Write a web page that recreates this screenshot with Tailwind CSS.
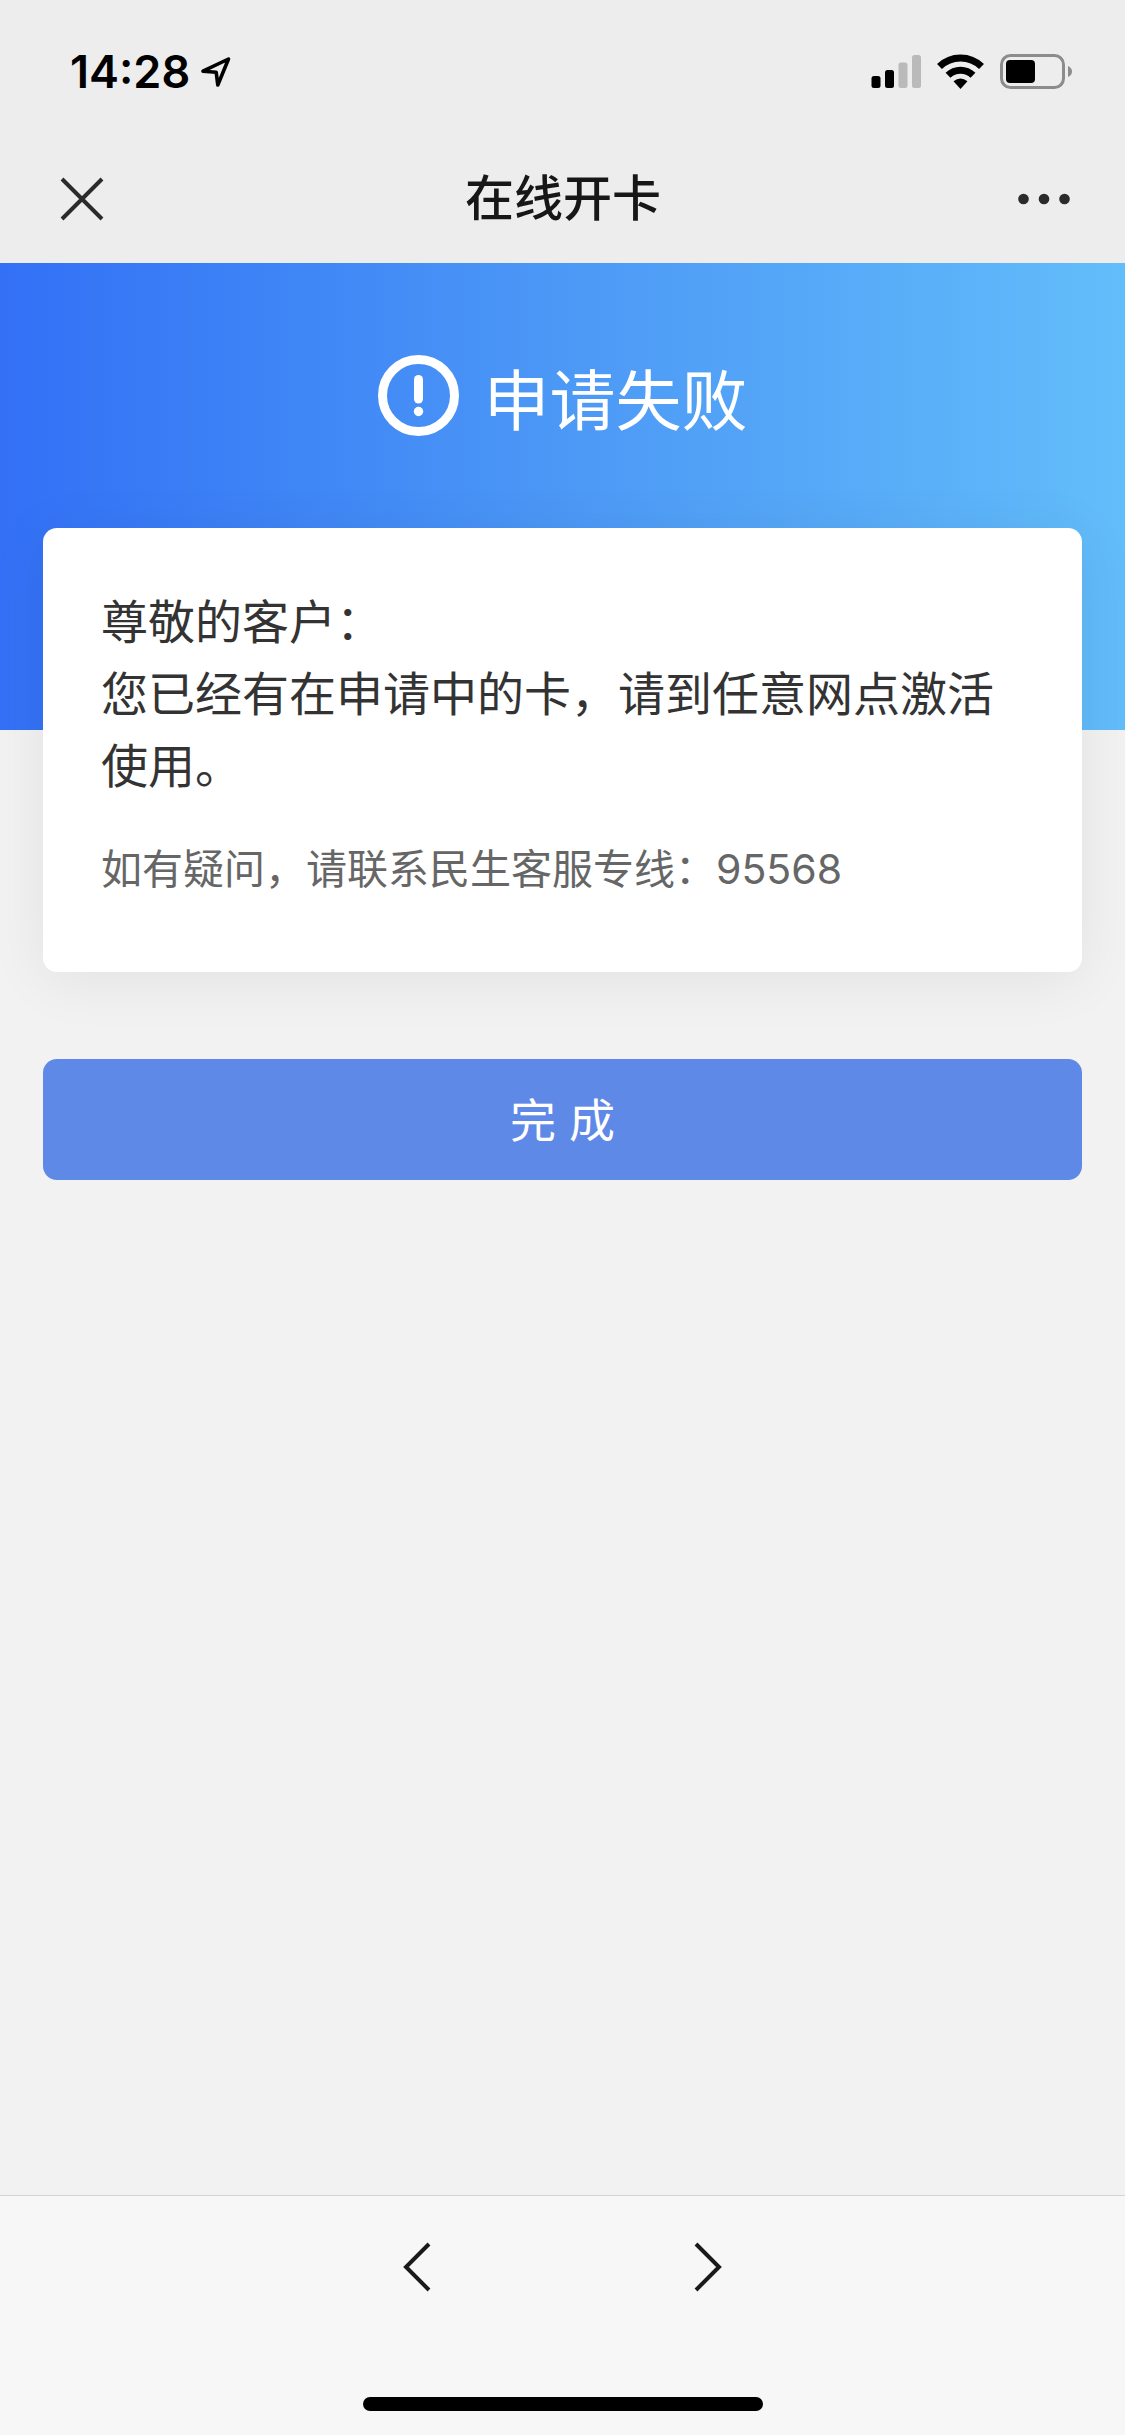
<!DOCTYPE html>
<html lang="zh-CN">
<head>
<meta charset="utf-8">
<meta name="viewport" content="width=device-width, initial-scale=1">
<title>在线开卡</title>
<script src="https://cdn.jsdelivr.net/npm/@tailwindcss/browser@4"></script>
</head>
<body class="flex min-h-screen flex-col bg-[#f2f2f2] font-['Inter','Noto_Sans_CJK_SC',sans-serif] text-[#333]">
  <header class="bg-[#ededed] text-black">
    <!-- status bar -->
    <div class="flex h-[132px] items-center justify-between pt-3 pl-[70px] pr-[52px]">
      <div class="flex items-center gap-2.5">
        <span class="text-[45px] leading-[48px] font-semibold">14:28</span>
        <svg class="h-8 w-8" viewBox="0 0 32 32" fill="none" stroke="#000" stroke-width="3.6" stroke-linejoin="round" aria-hidden="true"><path d="M28.500 3L3 15.200L16.200 16.200L17.800 29Z"/></svg>
      </div>
      <div class="flex items-center gap-4">
        <svg class="h-[34px] w-[50px]" viewBox="0 0 50 34" aria-label="信号">
          <rect x="0.500" y="21" width="9" height="12" rx="2.500"/>
          <rect x="14" y="15" width="9" height="18" rx="2.500"/>
          <rect x="27.500" y="7.500" width="9" height="25.500" rx="2.500" fill="#bababa"/>
          <rect x="41" y="0" width="9" height="33" rx="2.500" fill="#bababa"/>
        </svg>
        <svg class="h-9 w-[47px]" viewBox="0 0 47 36" fill="none" stroke="#000" aria-label="无线网络">
          <path d="M2.500 12.500A30 30 0 0 1 44.500 12.500" stroke-width="7"/>
          <path d="M11 21.300A18 18 0 0 1 36 21.300" stroke-width="7"/>
          <path d="M16.500 27.300Q23.500 21.500 30.500 27.300L23.500 35Z" fill="#000" stroke="none"/>
        </svg>
        <svg class="h-9 w-[73px]" viewBox="0 0 73 36" aria-label="电池">
          <rect x="1.500" y="1.500" width="62" height="32" rx="9" fill="none" stroke="#8c8c8c" stroke-width="3"/>
          <rect x="6" y="6" width="29" height="23" rx="4"/>
          <path d="M68 12Q72 14 72 17.500T68 23Z" fill="#8c8c8c"/>
        </svg>
      </div>
    </div>
    <!-- title bar -->
    <div class="flex h-[131px] items-center justify-between pt-0.5 pl-14 pr-[55px]">
      <button type="button" aria-label="关闭" class="flex h-16 w-16 items-center">
        <svg class="h-[50px] w-[50px]" viewBox="0 0 50 50" stroke="#2b2b2b" stroke-width="4" aria-hidden="true"><path d="M6 5L46 45M46 5L6 45"/></svg>
      </button>
      <h1 class="text-[49px] leading-[64px] font-medium text-[#171717]">在线开卡</h1>
      <button type="button" aria-label="更多" class="flex h-16 w-16 items-center justify-end">
        <svg class="h-4 w-[52px]" viewBox="0 0 52 16" fill="#2b2b2b" aria-hidden="true"><circle cx="5.500" cy="8" r="5.300"/><circle cx="26" cy="8" r="5.300"/><circle cx="46.500" cy="8" r="5.300"/></svg>
      </button>
    </div>
  </header>

  <main class="flex-1">
    <section class="flex h-[467px] items-start justify-center gap-[25px] bg-linear-to-r from-[#3370f6] via-[#4c98f6] to-[#63bdfa] pt-[92px] text-white">
      <svg class="h-[81px] w-[81px]" viewBox="0 0 81 81" fill="#fff" aria-hidden="true">
        <circle cx="40.500" cy="40.500" r="36" fill="none" stroke="#fff" stroke-width="9"/>
        <rect x="36" y="20" width="9" height="28.500" rx="4.500"/>
        <circle cx="40.500" cy="56.500" r="4.700"/>
      </svg>
      <h2 class="pt-1.5 text-[66px] leading-[80px] font-normal">申请失败</h2>
    </section>
    <div class="-mt-[202px] px-[43px]">
      <article class="rounded-[14px] bg-white px-[58px] pt-[58px] pb-[73px] shadow-[0_8px_60px_rgba(0,0,0,0.07)]">
        <p class="text-[47px] leading-[72px]">尊敬的客户：</p>
        <p class="text-[47px] leading-[72px]">您已经有在申请中的卡，请到任意网点激活使用。</p>
        <p class="mt-[37px] text-[41px] leading-[60px] text-[#666]">如有疑问，请联系民生客服专线：95568</p>
      </article>
      <button type="button" class="mt-[87px] h-[121px] w-full rounded-[14px] bg-[#5e89e6] pt-0.5 text-[46px] text-white">完 成</button>
    </div>
  </main>

  <footer class="border-t border-[#d4d4d4] bg-[#f7f7f7]">
    <nav class="flex h-[141px] items-center justify-center gap-[195px]" aria-label="页面导航">
      <button type="button" aria-label="后退" class="flex h-24 w-24 items-center justify-center">
        <svg class="h-[50px] w-[28px]" viewBox="0 0 28 50" fill="none" stroke="#1a1a1a" stroke-width="4" aria-hidden="true"><path d="M26 2L3 25L26 48"/></svg>
      </button>
      <button type="button" aria-label="前进" class="flex h-24 w-24 items-center justify-center">
        <svg class="h-[50px] w-[28px]" viewBox="0 0 28 50" fill="none" stroke="#1a1a1a" stroke-width="4" aria-hidden="true"><path d="M2 2L25 25L2 48"/></svg>
      </button>
    </nav>
    <div class="flex justify-center pt-[60px] pb-6">
      <div class="h-3.5 w-[400px] rounded-full bg-black"></div>
    </div>
  </footer>
</body>
</html>
